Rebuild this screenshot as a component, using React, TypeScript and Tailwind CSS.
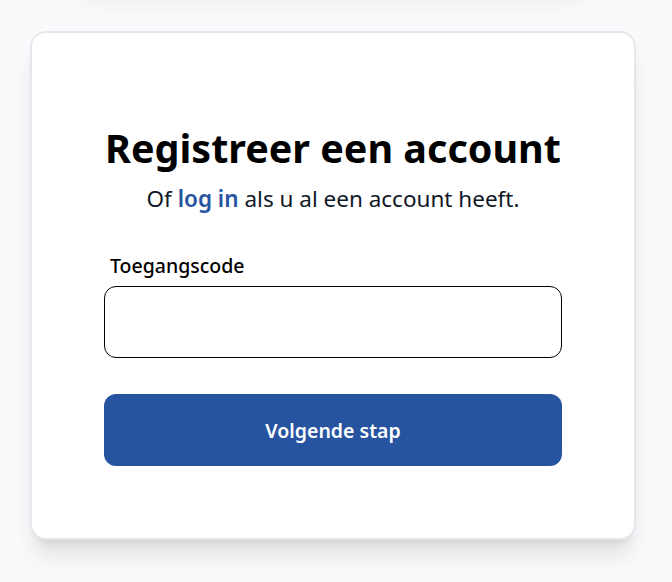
export default function App() {
  return (
    <div
      className="min-h-[582px] overflow-hidden bg-gray-50 pt-[31px] pr-[36px] pb-10 pl-[30px]"
      style={{ fontFamily: '"Noto Sans", "Open Sans", sans-serif' }}
    >
      {/* bottom edge of the panel above, just out of view */}
      <div className="mx-[50px] mt-[-71px] mb-[31px] h-[40px] rounded-2xl bg-white shadow-[0_4px_18px_rgba(0,0,0,0.05)]" />

      <div className="rounded-2xl border-2 border-gray-200 bg-white px-[72px] pt-[91px] pb-[72px] shadow-xl">
        <h1 className="whitespace-nowrap text-center text-[39.5px] font-bold leading-tight text-black">
          Registreer een account
        </h1>
        <p className="mt-[11px] text-center text-[22.5px] leading-[30px] text-gray-900">
          Of <a href="#" className="font-semibold text-[#2654a0]">log in</a> als u al een account heeft.
        </p>

        <form className="mt-[38px]" onSubmit={(e) => e.preventDefault()}>
          <label htmlFor="code" className="ml-1.5 block text-[19.5px] leading-7 font-medium text-black">
            Toegangscode
          </label>
          <input
            id="code"
            type="text"
            className="mt-1.5 block h-[72px] w-full rounded-xl border border-black px-4 text-lg outline-none"
          />
          <button
            type="submit"
            className="mt-9 h-[72px] w-full rounded-xl bg-[#2654a0] text-[19.5px] font-semibold text-white"
          >
            Volgende stap
          </button>
        </form>
      </div>
    </div>
  );
}
